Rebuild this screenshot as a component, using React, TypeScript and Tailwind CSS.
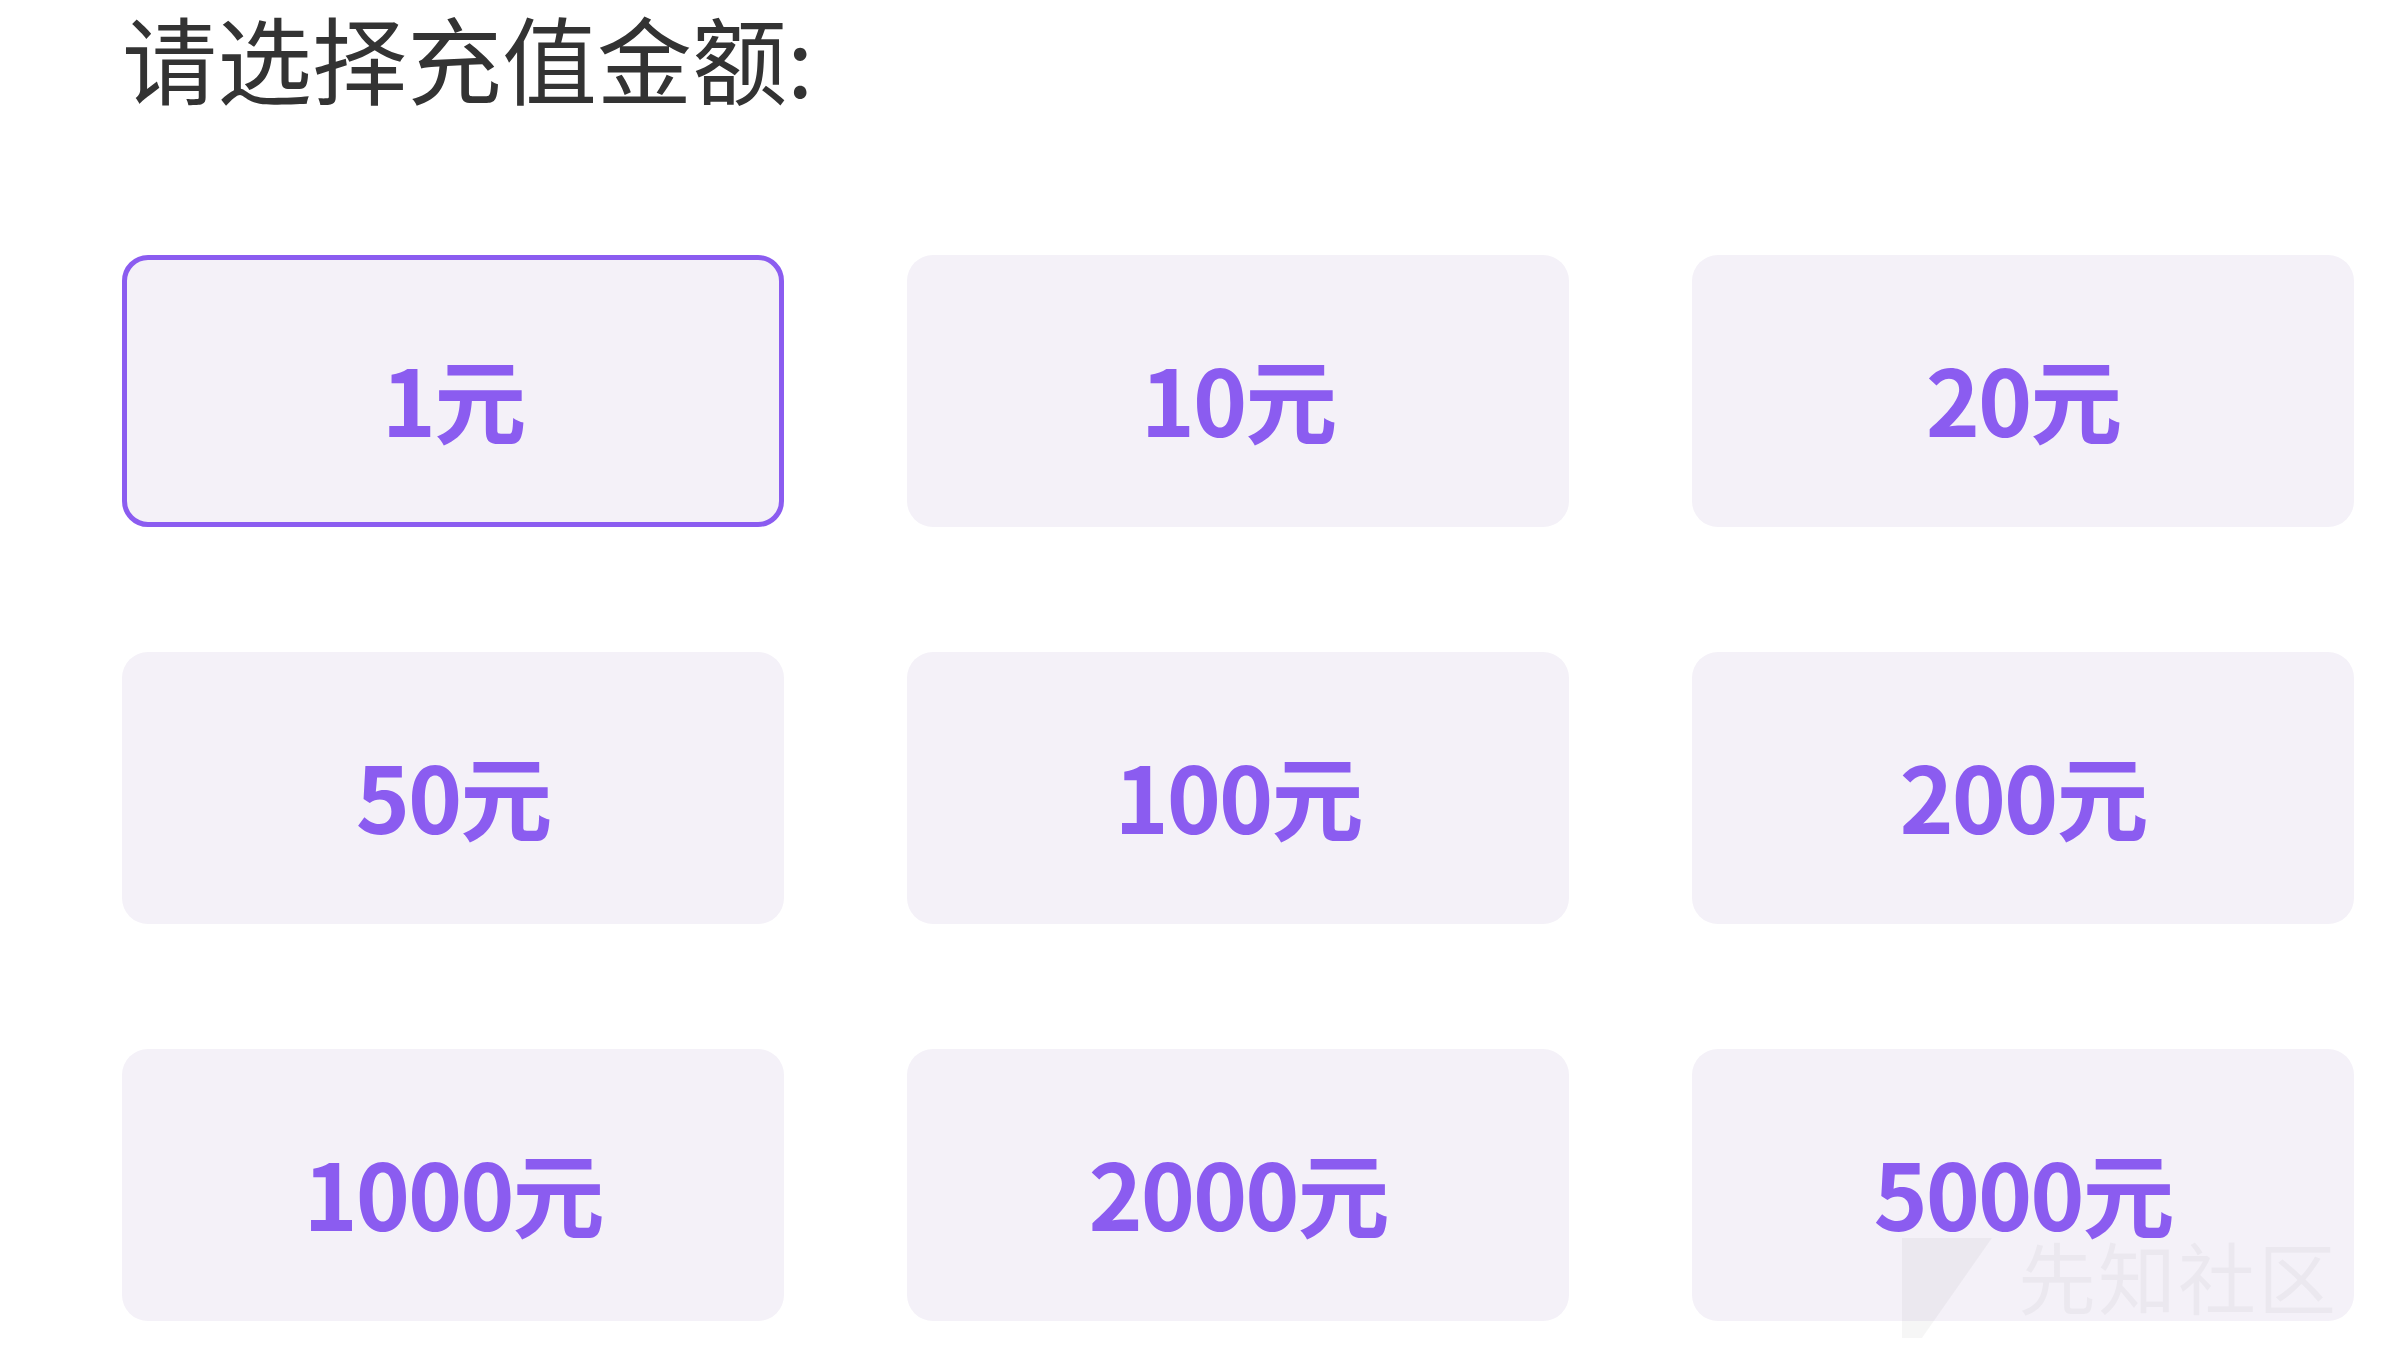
import { useState } from 'react';

// 充值金额选项
const amounts = [1, 10, 20, 50, 100, 200, 1000, 2000, 5000];

const App = () => {
  const [selected, setSelected] = useState(1);

  return (
    <div
      className="relative w-[2407px] h-[1347px] overflow-hidden bg-white pl-[122px]"
      style={{ fontFamily: '"Noto Sans CJK SC", "Noto Sans", sans-serif' }}
    >
      <h1 className="pt-[2px] text-[95px] leading-[110px] font-normal text-[#333333]">
        请选择充值金额:
      </h1>

      <div className="mt-[143px] grid grid-cols-[repeat(3,662px)] gap-x-[123px] gap-y-[125px]">
        {amounts.map((a) => (
          <button
            key={a}
            onClick={() => setSelected(a)}
            className={
              'h-[272px] rounded-[26px] bg-[#f4f1f8] flex items-center justify-center pt-[12px] text-[92px] font-bold tracking-[-2px] text-[#8b5cf0] leading-none ' +
              (selected === a ? 'border-[5px] border-[#8b5cf0]' : 'border-[5px] border-transparent')
            }
          >
            {a}元
          </button>
        ))}
      </div>

      {/* 水印 */}
      <div className="pointer-events-none absolute left-[1902px] top-[1228px] flex items-start gap-[26px] text-black/[0.035]">
        <svg width="90" height="110" viewBox="0 0 90 110">
          <path d="M0 10 L90 10 L20 110 L0 110 Z" fill="currentColor" />
        </svg>
        <span className="mt-[8px] text-[78px] leading-none tracking-[2px]">先知社区</span>
      </div>
    </div>
  );
};

export default App;
